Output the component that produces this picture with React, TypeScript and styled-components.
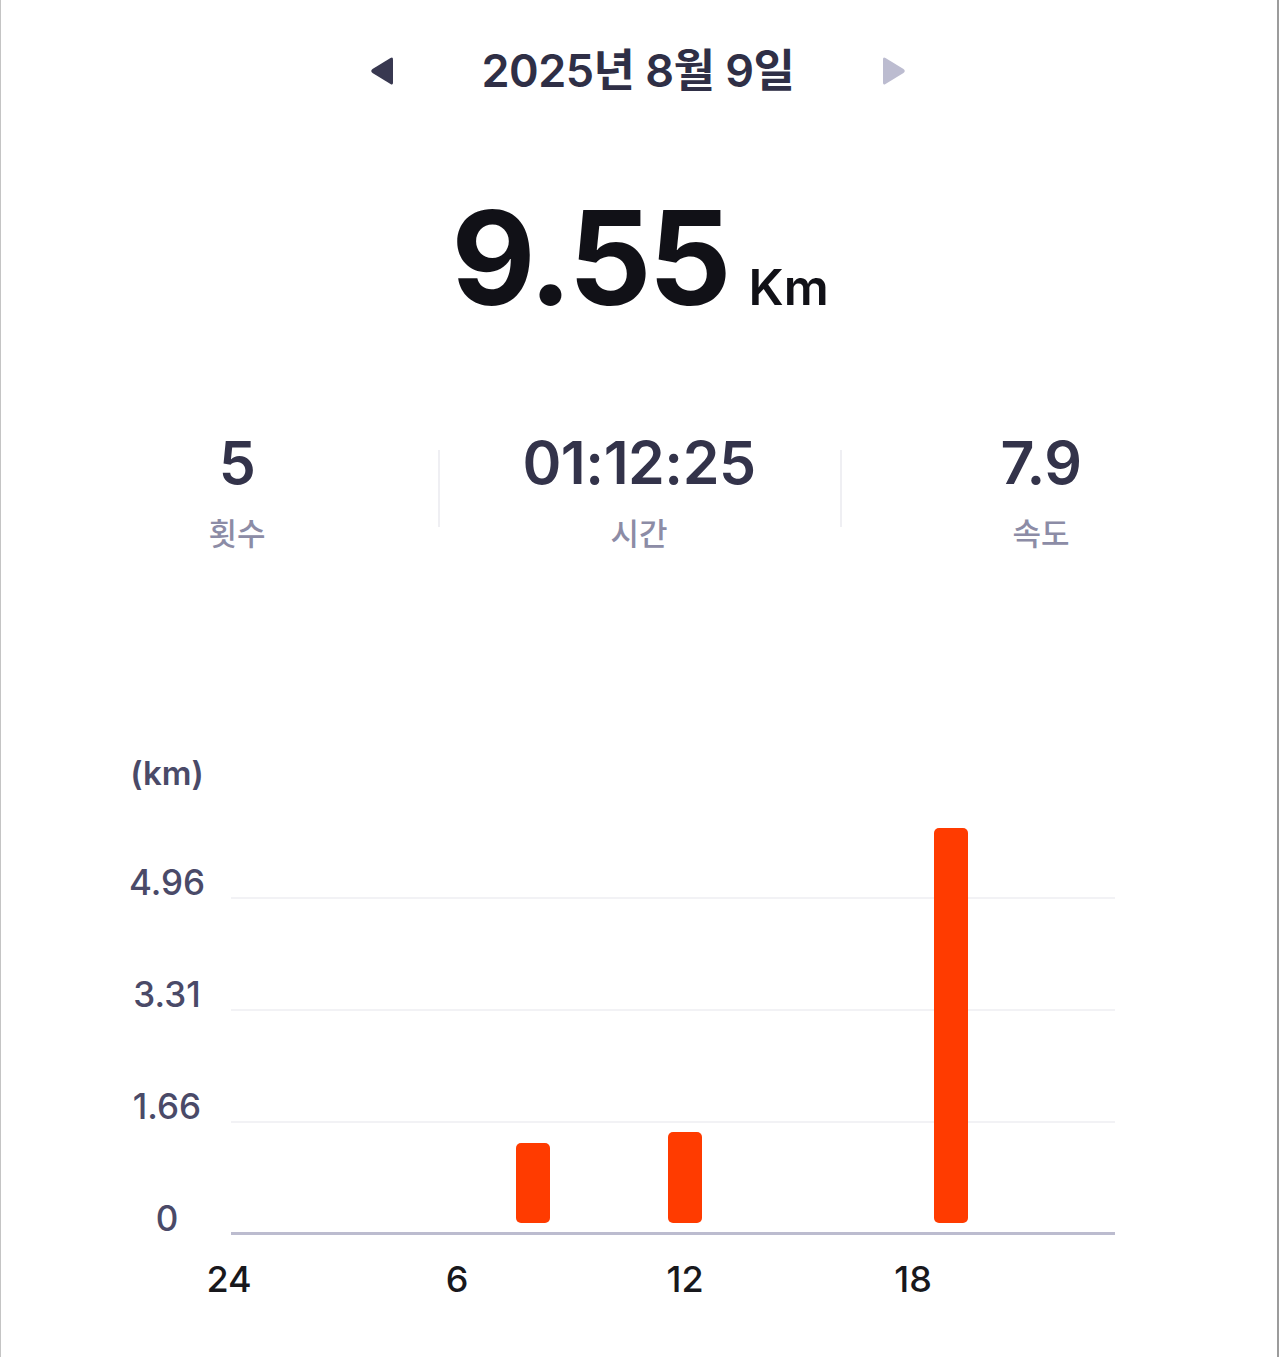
import React from 'react'
import styled, { createGlobalStyle } from 'styled-components'

const GlobalStyle = createGlobalStyle`
  html, body {
    margin: 0;
    padding: 0;
    background: #ffffff;
  }
  body {
    font-family: Inter, 'Noto Sans CJK KR', 'Noto Sans', sans-serif;
  }
`

const Page = styled.div`
  box-sizing: border-box;
  width: 1279px;
  height: 1357px;
  background: #ffffff;
  border-left: 1px solid #c4c4c4;
  border-right: 2px solid #9c9c9c;
  display: flex;
  flex-direction: column;
  align-items: center;
  overflow: hidden;
`

const DateBar = styled.div`
  display: flex;
  align-items: center;
  justify-content: center;
  gap: 84px;
  height: 60px;
  margin-top: 41px;
  margin-left: -2px;
`

const Arrow = styled.button<{ dim?: boolean }>`
  border: none;
  background: none;
  padding: 0;
  width: 28px;
  height: 30px;
  display: flex;
  align-items: center;
  justify-content: center;
  color: ${({ dim }) => (dim ? '#bcbcd0' : '#383850')};
  cursor: pointer;
`

const DateTitle = styled.h1`
  margin: 0;
  font-size: 45px;
  font-weight: 600;
  letter-spacing: -0.5px;
  color: #2f2f46;
  line-height: 60px;
`

const DistanceRow = styled.div`
  display: flex;
  align-items: baseline;
  gap: 20px;
  margin-top: 82px;
  margin-left: 2px;
`

const DistanceValue = styled.span`
  font-size: 130px;
  font-weight: 700;
  letter-spacing: -3px;
  line-height: 150px;
  color: #111117;
`

const DistanceUnit = styled.span`
  font-size: 50px;
  font-weight: 600;
  color: #111117;
`

const StatsRow = styled.div`
  display: grid;
  grid-template-columns: repeat(3, 402px);
  margin-top: 100px;
`

const StatCell = styled.div<{ divider?: boolean }>`
  display: flex;
  flex-direction: column;
  align-items: center;
  position: relative;

  &::before {
    content: '';
    display: ${({ divider }) => (divider ? 'block' : 'none')};
    position: absolute;
    left: 0;
    top: 17px;
    width: 2px;
    height: 77px;
    background: #efeff3;
  }
`

const StatValue = styled.div`
  font-size: 59px;
  font-weight: 600;
  line-height: 60px;
  color: #33334a;
  letter-spacing: -0.5px;
`

const StatLabel = styled.div`
  font-family: 'Noto Sans CJK KR', sans-serif;
  font-size: 31px;
  font-weight: 500;
  line-height: 42px;
  margin-top: 18px;
  color: #8c8ca6;
`

const Chart = styled.div`
  align-self: flex-start;
  margin-left: 114px;
  margin-top: 200px;
  display: grid;
  grid-template-columns: 104px 884px;
  column-gap: 12px;
`

const UnitLabel = styled.div`
  grid-column: 1;
  text-align: center;
  font-size: 33px;
  font-weight: 600;
  line-height: 34px;
  margin-top: 3px;
  margin-bottom: -3px;
  color: #4a4a68;
`

const YAxis = styled.div`
  grid-column: 1;
  display: flex;
  flex-direction: column;
`

const YTick = styled.div`
  height: 112px;
  display: flex;
  align-items: flex-end;
  justify-content: center;
  font-size: 35px;
  font-weight: 500;
  line-height: 28px;
  padding-bottom: 3px;
  box-sizing: border-box;
  color: #4a4a68;
`

const Plot = styled.div`
  grid-column: 2;
  position: relative;
  display: flex;
  flex-direction: column;
`

const GridRow = styled.div<{ base?: boolean }>`
  box-sizing: border-box;
  height: 112px;
  border-bottom: ${({ base }) => (base ? '3px solid #bcbccf' : '2px solid #f2f2f5')};
`

const Bar = styled.div`
  position: absolute;
  bottom: 12px;
  width: 34px;
  border-radius: 5px;
  background: #ff3b00;
`

const XAxis = styled.div`
  grid-column: 1 / span 2;
  display: flex;
  margin-top: 27px;
`

const XTick = styled.div`
  width: 228px;
  text-align: center;
  font-size: 36px;
  font-weight: 500;
  line-height: 34px;
  color: #18181c;
`

function Triangle({ dir }: { dir: 'left' | 'right' }) {
  return (
    <svg width="28" height="30" viewBox="0 0 28 30">
      {dir === 'left' ? (
        <path d="M24 3.5 L24 26.5 Q24 29.5 21.5 28 L3.5 17 Q1 15 3.5 13 L21.5 2 Q24 0.5 24 3.5 Z" fill="currentColor" />
      ) : (
        <path d="M4 3.5 L4 26.5 Q4 29.5 6.5 28 L24.5 17 Q27 15 24.5 13 L6.5 2 Q4 0.5 4 3.5 Z" fill="currentColor" />
      )}
    </svg>
  )
}

const stats = [
  { value: '5', label: '횟수' },
  { value: '01:12:25', label: '시간' },
  { value: '7.9', label: '속도' },
]

const yTicks = ['4.96', '3.31', '1.66', '0']
const xTicks = ['24', '6', '12', '18']

// hour of day -> bar height in px
const bars = [
  { hour: 8, height: 80 },
  { hour: 12, height: 91 },
  { hour: 19, height: 395 },
]

const HOUR_WIDTH = 38

export default function App() {
  return (
    <>
      <GlobalStyle />
      <Page>
        <DateBar>
          <Arrow aria-label="이전">
            <Triangle dir="left" />
          </Arrow>
          <DateTitle>2025년 8월 9일</DateTitle>
          <Arrow dim aria-label="다음">
            <Triangle dir="right" />
          </Arrow>
        </DateBar>

        <DistanceRow>
          <DistanceValue>9.55</DistanceValue>
          <DistanceUnit>Km</DistanceUnit>
        </DistanceRow>

        <StatsRow>
          {stats.map((s, i) => (
            <StatCell key={s.label} divider={i > 0}>
              <StatValue>{s.value}</StatValue>
              <StatLabel>{s.label}</StatLabel>
            </StatCell>
          ))}
        </StatsRow>

        <Chart>
          <UnitLabel>(km)</UnitLabel>
          <div />
          <YAxis>
            {yTicks.map((t) => (
              <YTick key={t}>{t}</YTick>
            ))}
          </YAxis>
          <Plot>
            <GridRow />
            <GridRow />
            <GridRow />
            <GridRow base />
            {bars.map((b) => (
              <Bar key={b.hour} style={{ left: b.hour * HOUR_WIDTH - 19, height: b.height }} />
            ))}
          </Plot>
          <XAxis>
            {xTicks.map((t) => (
              <XTick key={t}>{t}</XTick>
            ))}
          </XAxis>
        </Chart>
      </Page>
    </>
  )
}
